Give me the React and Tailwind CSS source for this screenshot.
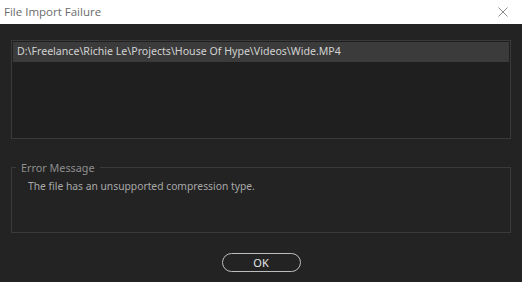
const App = () => {
  return (
    <div className="w-[522px] h-[282px] flex flex-col bg-[#232323] font-['Noto_Sans',sans-serif] overflow-hidden">
      {/* Title bar */}
      <div className="h-6 bg-white flex items-center justify-between pl-1 pr-[14px]">
        <span className="text-[11.5px] text-[#6b6b6b] font-['Open_Sans',sans-serif]">File Import Failure</span>
        <svg width="10" height="10" viewBox="0 0 10 10" className="text-[#8a8a8a]">
          <path d="M0.5 0.5L9.5 9.5M9.5 0.5L0.5 9.5" stroke="currentColor" strokeWidth="1" />
        </svg>
      </div>

      <div className="flex flex-col px-[11px] pt-4">
        {/* File list */}
        <div className="h-[99px] border border-[#3a3a3a] bg-[#1f1f1f] p-px">
          <div className="h-5 bg-[#3b3b3b] flex items-center pl-1 text-[10.6px] text-[#d2d2d2]">
            D:\Freelance\Richie Le\Projects\House Of Hype\Videos\Wide.MP4
          </div>
        </div>

        {/* Error message */}
        <fieldset className="mt-[22px] h-[72px] border border-[#3a3a3a] px-[4px]">
          <legend className="px-[5px] text-[10.8px] text-[#8e8e8e] leading-[13px]">Error Message</legend>
          <p className="pl-3 pt-[5px] text-[10.3px] text-[#a8a8a8]">
            The file has an unsupported compression type.
          </p>
        </fieldset>

        {/* Button */}
        <div className="flex justify-center mt-5">
          <button className="w-[79px] h-[19px] rounded-full border border-[#bdbdbd] text-[11px] text-[#e6e6e6] leading-none flex items-center justify-center">
            OK
          </button>
        </div>
      </div>
    </div>
  );
};

export default App;
